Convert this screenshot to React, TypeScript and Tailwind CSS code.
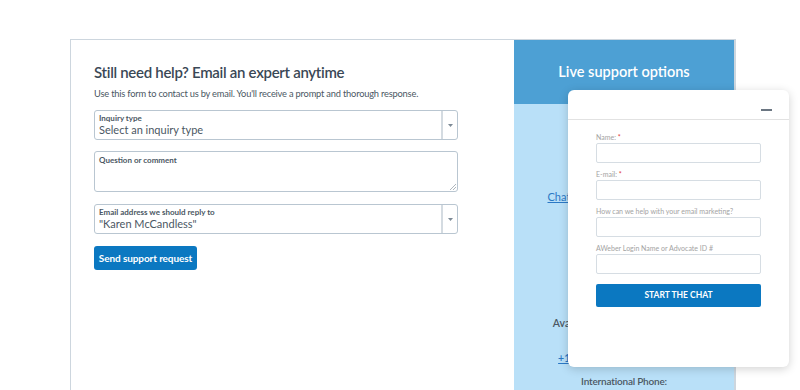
// Support page — email form + live support panel with chat widget overlay

function SelectBox({ label, value }: { label: string; value: string }) {
  return (
    <div className="flex h-[30px] w-[364px] rounded-[3px] border border-[#b9c6d1] bg-white">
      <div className="flex flex-1 flex-col justify-center pl-[4px]">
        <span className="text-[8px] font-bold leading-[10px] text-[#4b5763]">{label}</span>
        <span className="text-[11px] leading-[14px] text-[#4b5763]">{value}</span>
      </div>
      <div className="flex w-[16px] items-center justify-center border-l-2 border-[#d4dbe1]">
        <svg width="5" height="3" viewBox="0 0 5 3" aria-hidden>
          <path d="M0 0h5L2.5 3z" fill="#7d8a96" />
        </svg>
      </div>
    </div>
  )
}

function ChatField({ label, required }: { label: string; required?: boolean }) {
  return (
    <div className="flex flex-col gap-[1px]">
      <span className="text-[7px] leading-[10px] text-[#a3a3a3]">
        {label}
        {required && <span className="text-[#e23b3b]"> *</span>}
      </span>
      <div className="h-[20px] w-[165px] rounded-[2px] border border-[#d6dde3] bg-white" />
    </div>
  )
}

function ChatWidget() {
  return (
    <div className="absolute left-[497px] top-[50px] h-[277px] w-[221px] rounded-[6px] bg-white shadow-[0_2px_10px_rgba(0,0,0,0.18)]">
      <div className="flex h-[30px] items-end justify-end border-b border-[#e2e2e2] pb-[8px] pr-[17px]">
        <div className="h-[2px] w-[11px] bg-[#6b7682]" />
      </div>
      <div className="flex flex-col gap-[6px] pl-[28px] pt-[12px]">
        <ChatField label="Name:" required />
        <ChatField label="E-mail:" required />
        <ChatField label="How can we help with your email marketing?" />
        <ChatField label="AWeber Login Name or Advocate ID #" />
        <button className="mt-[4px] h-[23px] w-[165px] rounded-[2px] bg-[#0b78c1] text-[8.5px] font-bold text-white">
          START THE CHAT
        </button>
      </div>
    </div>
  )
}

export default function App() {
  return (
    <div className="h-[390px] w-[800px] overflow-hidden bg-white font-['Lato',sans-serif]">
      <div className="relative ml-[70px] mt-[39px] flex h-[400px] w-[666px] border border-[#cdd6de]">
        {/* Left: email form */}
        <div className="flex w-[443px] flex-col pl-[23px] pt-[23px]">
          <h1 className="text-[15px] font-semibold leading-[18px] tracking-[-0.3px] text-[#3a4856]">
            Still need help? Email an expert anytime
          </h1>
          <p className="mt-[7px] text-[9.3px] leading-[12px] tracking-[-0.2px] text-[#4b5763]">
            Use this form to contact us by email. You'll receive a prompt and thorough response.
          </p>
          <div className="mt-[10px]">
            <SelectBox label="Inquiry type" value="Select an inquiry type" />
          </div>
          <div className="relative mt-[11px] h-[41px] w-[364px] rounded-[3px] border border-[#b9c6d1] pl-[4px] pt-[3px]">
            <span className="block text-[8px] font-bold leading-[10px] text-[#4b5763]">Question or comment</span>
            <svg className="absolute bottom-[1px] right-[1px]" width="6" height="6" viewBox="0 0 6 6" aria-hidden>
              <path d="M6 0L0 6M6 3L3 6" stroke="#9aa4ad" strokeWidth="0.8" />
            </svg>
          </div>
          <div className="mt-[12px]">
            <SelectBox label="Email address we should reply to" value={'"Karen McCandless"'} />
          </div>
          <button className="mt-[12px] h-[24px] w-[103px] rounded-[3px] bg-[#0b78c1] text-[10px] font-bold tracking-[-0.1px] text-white">
            Send support request
          </button>
        </div>

        {/* Right: live support */}
        <div className="flex w-[221px] flex-col border-r border-[#cdd6de] bg-[#b9e0f8]">
          <div className="flex h-[64px] items-center justify-center bg-[#4da0d4]">
            <span className="text-[14.5px] font-semibold text-white">Live support options</span>
          </div>
          <div className="flex flex-col items-center pt-[86px] text-[11px] leading-[14px] text-[#4b5763]">
            <a className="text-[#2b78c5] underline">Chat with a support expert now</a>
            <span className="mt-[112px] text-[10.5px] font-semibold">Available 24/7 365 days a year</span>
            <a className="mt-[21px] text-[10.5px] font-semibold text-[#2b78c5] underline">+1 (877) 293-2837 (toll free)</a>
            <span className="mt-[9px] text-[10px] font-semibold tracking-[-0.2px]">International Phone:</span>
          </div>
        </div>

        <ChatWidget />
      </div>
    </div>
  )
}
